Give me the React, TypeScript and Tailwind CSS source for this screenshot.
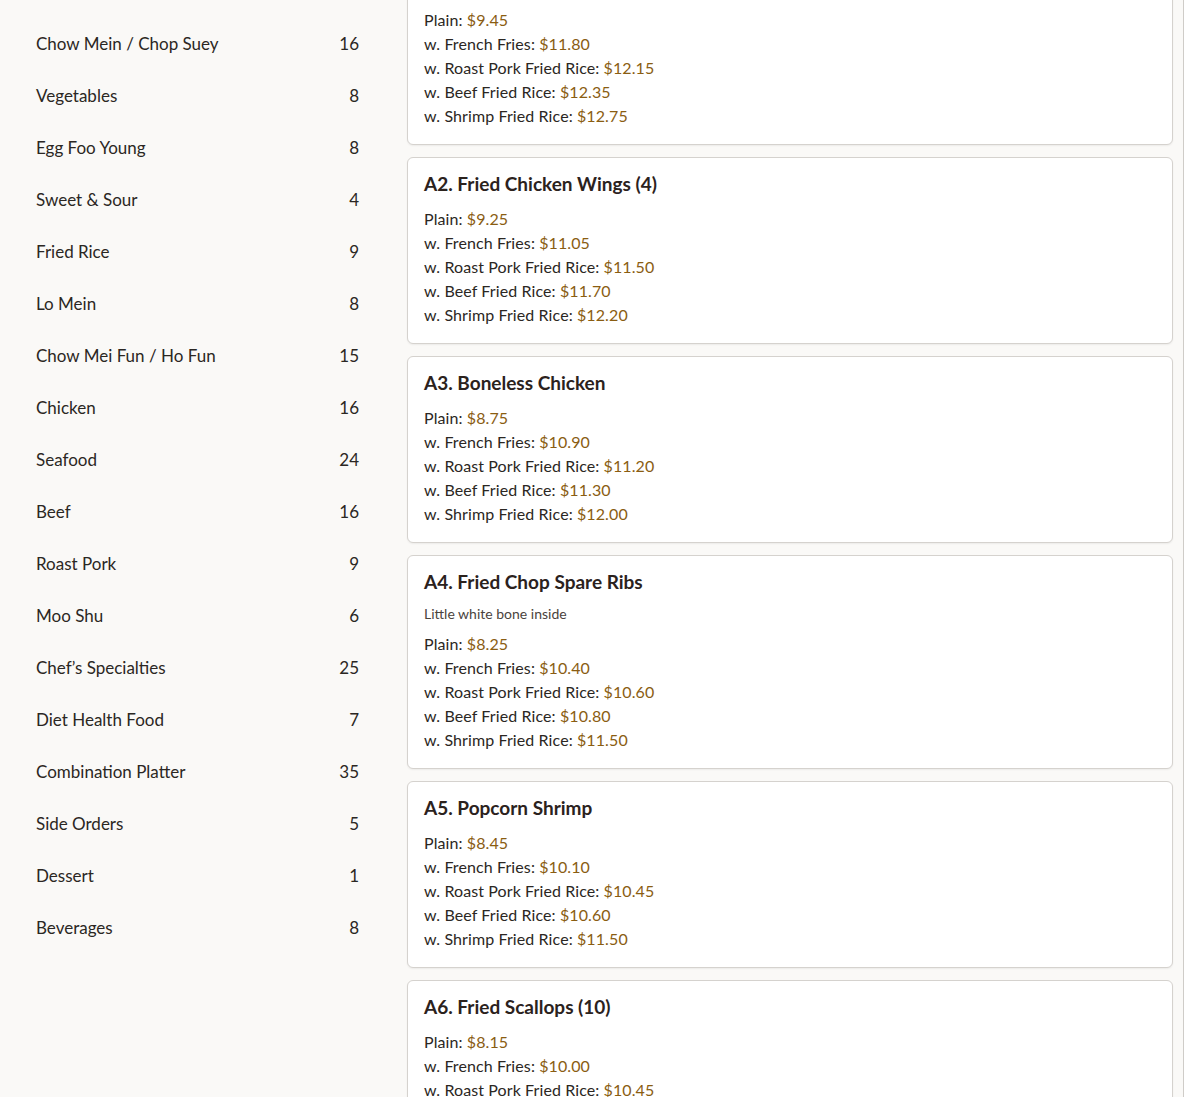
import React from "react";

const categories: [string, number][] = [
  ["Chow Mein / Chop Suey", 16],
  ["Vegetables", 8],
  ["Egg Foo Young", 8],
  ["Sweet & Sour", 4],
  ["Fried Rice", 9],
  ["Lo Mein", 8],
  ["Chow Mei Fun / Ho Fun", 15],
  ["Chicken", 16],
  ["Seafood", 24],
  ["Beef", 16],
  ["Roast Pork", 9],
  ["Moo Shu", 6],
  ["Chef\u2019s Specialties", 25],
  ["Diet Health Food", 7],
  ["Combination Platter", 35],
  ["Side Orders", 5],
  ["Dessert", 1],
  ["Beverages", 8],
];

type Item = { title: string; desc?: string; prices: string[] };

const labels = [
  "Plain",
  "w. French Fries",
  "w. Roast Pork Fried Rice",
  "w. Beef Fried Rice",
  "w. Shrimp Fried Rice",
];

const items: Item[] = [
  { title: "A1. Chicken Nuggets (10)", prices: ["$9.45", "$11.80", "$12.15", "$12.35", "$12.75"] },
  { title: "A2. Fried Chicken Wings (4)", prices: ["$9.25", "$11.05", "$11.50", "$11.70", "$12.20"] },
  { title: "A3. Boneless Chicken", prices: ["$8.75", "$10.90", "$11.20", "$11.30", "$12.00"] },
  {
    title: "A4. Fried Chop Spare Ribs",
    desc: "Little white bone inside",
    prices: ["$8.25", "$10.40", "$10.60", "$10.80", "$11.50"],
  },
  { title: "A5. Popcorn Shrimp", prices: ["$8.45", "$10.10", "$10.45", "$10.60", "$11.50"] },
  { title: "A6. Fried Scallops (10)", prices: ["$8.15", "$10.00", "$10.45", "$10.60", "$11.50"] },
];

export default function App() {
  return (
    <div
      className="flex h-[1097px] w-full overflow-hidden bg-[#faf9f7] text-[#2b2723]"
      style={{ fontFamily: "Lato, 'Noto Sans', sans-serif" }}
    >
      <aside className="w-[395px] shrink-0 px-6 pt-[18px]">
        {categories.map(([name, count]) => (
          <div key={name} className="flex items-center justify-between px-3 py-3 text-[17px] leading-7">
            <span>{name}</span>
            <span>{count}</span>
          </div>
        ))}
      </aside>
      <main className="w-[788px] shrink-0 pl-3 pr-[10px]">
        <div className="-mt-[42px] flex flex-col gap-3">
          {items.map((it) => (
            <div
              key={it.title}
              className="rounded-md border border-[#d5d2ce] bg-white p-4 shadow-[0_1px_2px_rgba(0,0,0,0.06)]"
            >
              <div className="mb-[13px] text-[19px] font-bold leading-[20px] text-[#2b221d]">{it.title}</div>
              {it.desc && <div className="-mt-[1px] mb-2 text-[14px] leading-5 text-[#4a433d]">{it.desc}</div>}
              {it.prices.map((p, i) => (
                <div key={i} className="text-[16px] leading-6 tracking-[0.1px]">
                  {labels[i]}: <span className="text-[#8a5d12]">{p}</span>
                </div>
              ))}
            </div>
          ))}
        </div>
      </main>
      <div className="flex-1 border-l border-[#cfccc8] bg-white" />
    </div>
  );
}
